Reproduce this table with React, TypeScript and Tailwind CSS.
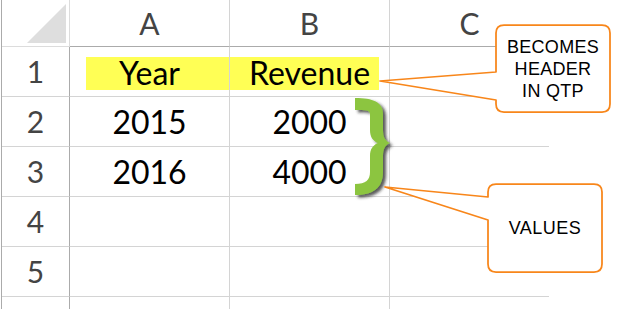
import React from 'react';

const rows = [
  { n: '1', a: 'Year', b: 'Revenue', hl: true },
  { n: '2', a: '2015', b: '2000' },
  { n: '3', a: '2016', b: '4000' },
  { n: '4', a: '', b: '' },
  { n: '5', a: '', b: '' },
  { n: '', a: '', b: '' },
];

const App = () => {
  return (
    <div className="relative w-[617px] h-[309px] bg-white overflow-hidden font-['Lato',sans-serif]">
      {/* Sheet grid */}
      <div className="ml-[1px] border-l border-[#ababab] w-[548px] grid grid-cols-[68px_160px_160px_159px] grid-rows-[47px_50px_50px_50px_50px_50px_50px]">
        {/* Column headers */}
        <div className="border-b border-r border-[#dcdcdc] flex items-end justify-end pr-[3px] pb-[3px]">
          <svg width="39" height="39" viewBox="0 0 39 39">
            <polygon points="0,39 39,39 39,0" fill="#dedede" />
          </svg>
        </div>
        {['A', 'B', 'C'].map((c, i) => (
          <div
            key={c}
            className={`border-b border-[#ababab] flex items-center justify-center text-[30px] text-[#444] ${i < 2 ? 'border-r border-r-[#d4d4d4]' : ''}`}
          >
            {c}
          </div>
        ))}

        {/* Rows */}
        {rows.map((r, i) => (
          <React.Fragment key={i}>
            <div className="border-r border-r-[#ababab] border-b border-b-[#d4d4d4] flex items-center justify-center text-[30px] text-[#444]">
              {r.n}
            </div>
            <div className="border-r border-b border-[#d4d4d4] flex items-center text-[32px] text-black">
              {r.hl ? (
                <div className="ml-[16px] mt-[3px] h-[33px] w-full bg-[#ffff55] flex items-center justify-center pr-[16px]">
                  {r.a}
                </div>
              ) : (
                <div className="w-full text-center">{r.a}</div>
              )}
            </div>
            <div className="border-r border-b border-[#d4d4d4] flex items-center text-[32px] text-black">
              {r.hl ? (
                <div className="mr-[10px] mt-[3px] h-[33px] w-full bg-[#ffff55] flex items-center justify-center pl-[10px]">
                  {r.b}
                </div>
              ) : (
                <div className="w-full text-center">{r.b}</div>
              )}
            </div>
            <div className="border-b border-[#d4d4d4]" />
          </React.Fragment>
        ))}
      </div>

      {/* Annotations */}
      <svg className="absolute left-0 top-0" width="617" height="309" viewBox="0 0 617 309">
        <defs>
          <filter id="sh" x="-30%" y="-10%" width="160%" height="130%">
            <feDropShadow dx="3" dy="2.5" stdDeviation="1.5" floodColor="#222" floodOpacity="0.75" />
          </filter>
        </defs>
        <path
          d="M355,98 C373,98 383,102 383,114 L383,130 C383,137 385,141 390,143 C385,145 383,149 383,156 L383,172 C383,188 373,195 355,195 L355,184 C366,184 370,180 370,172 L370,156 C370,149 373,145 378,143 C373,141 370,137 370,130 L370,114 C370,110 366,110 355,110 Z"
          fill="#8cc540"
          filter="url(#sh)"
        />
        <path
          d="M504,25 H602 Q610,25 610,33 V104 Q610,112 602,112 H504 Q496,112 496,104 V100 L380,81 L496,72 V33 Q496,25 504,25 Z"
          fill="white"
          stroke="#f8861a"
          strokeWidth="1.75"
          strokeLinejoin="round"
        />
        <path
          d="M496,184 H594 Q602,184 602,192 V264 Q602,272 594,272 H496 Q488,272 488,264 V220 L385,187 L488,197 V192 Q488,184 496,184 Z"
          fill="white"
          stroke="#f8861a"
          strokeWidth="1.75"
          strokeLinejoin="round"
        />
      </svg>

      <div className="absolute left-[496px] top-[25px] w-[114px] h-[87px] flex flex-col items-center justify-center font-['Liberation_Sans',Arial,sans-serif] text-[18px] leading-[22px] tracking-[0.3px] text-black">
        <span>BECOMES</span>
        <span>HEADER</span>
        <span>IN QTP</span>
      </div>
      <div className="absolute left-[488px] top-[184px] w-[114px] h-[88px] flex items-center justify-center font-['Liberation_Sans',Arial,sans-serif] text-[18px] tracking-[0.5px] text-black">
        VALUES
      </div>
    </div>
  );
};

export default App;
